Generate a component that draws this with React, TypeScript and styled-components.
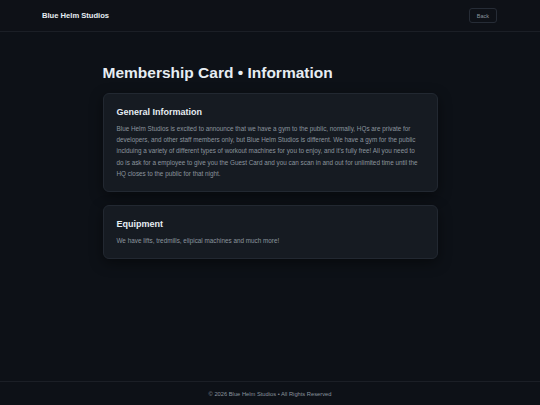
import styled, { createGlobalStyle } from "styled-components"

const GlobalStyle = createGlobalStyle`
  html, body {
    margin: 0;
    padding: 0;
    background: #0d1117;
  }
  body {
    font-family: "Liberation Sans", Arial, sans-serif;
    color: #e6edf3;
  }
  * { box-sizing: border-box; }
`

const cards = [
  {
    title: "General Information",
    body: "Blue Helm Studios is excited to announce that we have a gym to the public, normally, HQs are private for developers, and other staff members only, but Blue Helm Studios is different. We have a gym for the public inclduing a variety of different types of workout machines for you to enjoy, and it's fully free! All you need to do is ask for a employee to give you the Guest Card and you can scan in and out for unlimited time until the HQ closes to the public for that night.",
  },
  {
    title: "Equipment",
    body: "We have lifts, tredmills, elipical machines and much more!",
  },
]

const App = () => {
  return (
    <Page>
      <GlobalStyle />
      <Header>
        <Brand>Blue Helm Studios</Brand>
        <BackButton>Back</BackButton>
      </Header>
      <Main>
        <Title>Membership Card • Information</Title>
        {cards.map((c) => (
          <Card key={c.title}>
            <CardTitle>{c.title}</CardTitle>
            <CardText>{c.body}</CardText>
          </Card>
        ))}
      </Main>
      <Footer>© 2026 Blue Helm Studios • All Rights Reserved</Footer>
    </Page>
  )
}

export default App

const Page = styled.div`
  display: flex;
  flex-direction: column;
  min-height: 405px;
  background: #0d1117;
`

const Header = styled.header`
  display: flex;
  align-items: center;
  justify-content: space-between;
  height: 32px;
  padding: 0 43px 0 42px;
  background: #0e1117;
  border-bottom: 1px solid #1b1f26;
`

const Brand = styled.div`
  font-size: 7.6px;
  font-weight: 700;
  color: #e6edf3;
`

const BackButton = styled.button`
  height: 15px;
  padding: 0 7px;
  font-family: inherit;
  font-size: 5.5px;
  color: #8b949e;
  background: transparent;
  border: 1px solid #262c36;
  border-radius: 3px;
  cursor: pointer;
`

const Main = styled.main`
  flex: 1;
  width: 335px;
  margin: 0 auto;
  padding-top: 31px;
  display: flex;
  flex-direction: column;
  gap: 13px;
`

const Title = styled.h1`
  margin: 0 0 -3px;
  font-size: 15.5px;
  font-weight: 700;
  line-height: 20px;
  color: #e6edf3;
`

const Card = styled.section`
  padding: 12px 13px 12px;
  background: #161b22;
  border: 1px solid #222831;
  border-radius: 6px;
  box-shadow: 0 4px 14px rgba(0, 0, 0, 0.45);
`

const CardTitle = styled.h2`
  margin: 0 0 5px;
  font-size: 9px;
  font-weight: 700;
  line-height: 12px;
  color: #e6edf3;
`

const CardText = styled.p`
  margin: 0;
  font-size: 6.35px;
  line-height: 11.2px;
  color: #8b949e;
`

const Footer = styled.footer`
  height: 24px;
  display: flex;
  align-items: center;
  justify-content: center;
  border-top: 1px solid #1b1f26;
  font-size: 5.75px;
  color: #8b949e;
`
